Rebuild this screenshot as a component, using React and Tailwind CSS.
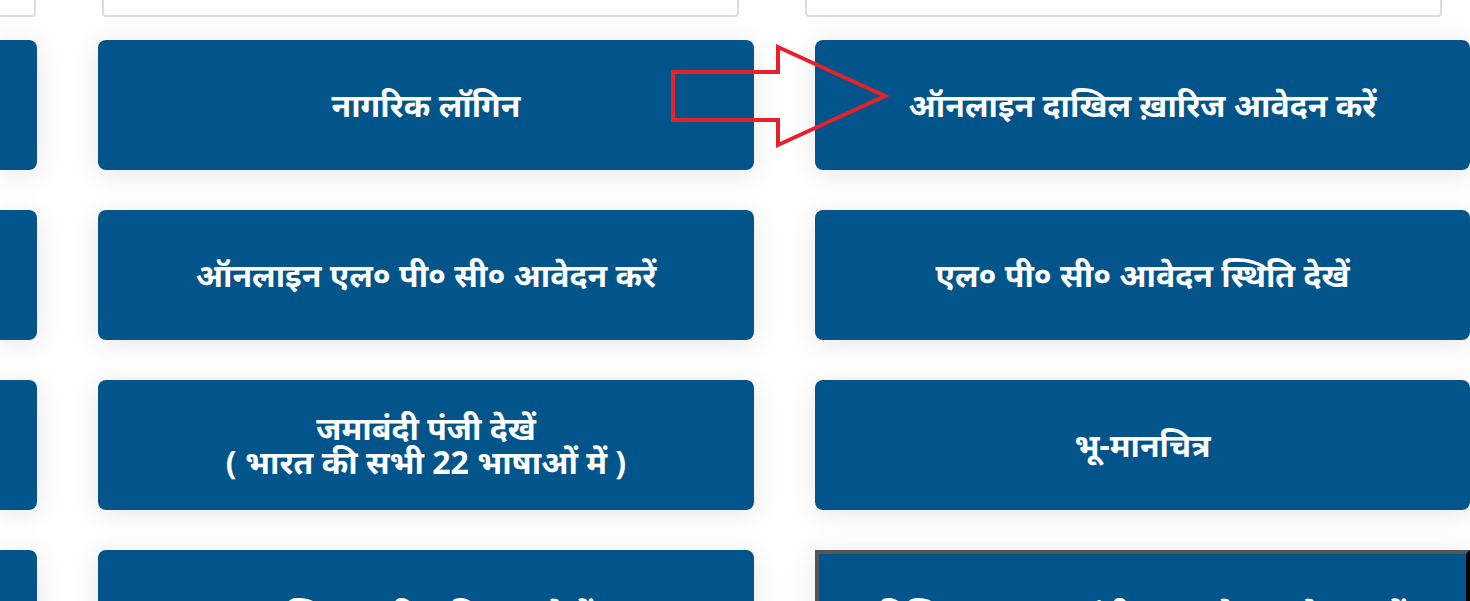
import React from "react";

const services = [
  { id: "login", label: "नागरिक लॉगिन" },
  { id: "mutation", label: "ऑनलाइन दाखिल ख़ारिज आवेदन करें" },
  { id: "lpc", label: "ऑनलाइन एल० पी० सी० आवेदन करें" },
  { id: "lpc-status", label: "एल० पी० सी० आवेदन स्थिति देखें" },
  { id: "jamabandi", label: "जमाबंदी पंजी देखें", sub: "( भारत की सभी 22 भाषाओं में )" },
  { id: "map", label: "भू-मानचित्र" },
  { id: "mutation-detail", label: "दाखिल ख़ारिज विवरण देखें" },
  { id: "digitized", label: "डिजिटाइज्ड जमाबंदी सुधार हेतु आवेदन करें", active: true },
];

const ServiceButton = ({ item }) => (
  <button
    type="button"
    className={
      item.active
        ? "h-[130px] w-full bg-[#02558a] text-white text-[32px] font-bold leading-[34px] whitespace-nowrap shadow-[0_4px_28px_rgba(0,0,0,0.1)] border-[4px] border-[#555] border-r-black border-b-black"
        : "h-[130px] w-full bg-[#02558a] text-white text-[32px] font-bold leading-[34px] whitespace-nowrap rounded-[8px] shadow-[0_4px_28px_rgba(0,0,0,0.1)]"
    }
  >
    <span className="block">{item.label}</span>
    {item.sub && <span className="block">{item.sub}</span>}
  </button>
);

// left column is scrolled mostly off-screen, only its right edge shows
const EdgeButton = () => (
  <div className="h-[130px] w-full bg-[#02558a] rounded-r-[8px] shadow-[0_4px_28px_rgba(0,0,0,0.1)]" />
);

export default function App() {
  const rows = [];
  for (let i = 0; i < services.length; i += 2) rows.push(services.slice(i, i + 2));

  return (
    <div
      className="relative w-[1470px] h-[601px] overflow-hidden bg-white"
      style={{ fontFamily: '"Noto Sans", "Lohit Devanagari", "Noto Sans Devanagari", sans-serif' }}
    >
      {/* search inputs above the grid */}
      <div className="flex gap-[66px] -mt-[31px]">
        <div className="w-[36px] h-[48px] shrink-0 bg-white border-2 border-[#dcdcdc] border-l-0 rounded-r-[4px]" />
        <input className="w-[637px] h-[48px] shrink-0 bg-white border-2 border-[#dcdcdc] rounded-[4px]" />
        <input className="w-[637px] h-[48px] shrink-0 bg-white border-2 border-[#dcdcdc] rounded-[4px]" />
      </div>

      <div className="mt-[23px] grid grid-cols-[37px_656px_1fr] gap-x-[61px] gap-y-[40px]">
        {rows.map((pair) => (
          <React.Fragment key={pair[0].id}>
            <EdgeButton />
            <ServiceButton item={pair[0]} />
            <ServiceButton item={pair[1]} />
          </React.Fragment>
        ))}
      </div>

      {/* red pointer arrow */}
      <svg className="absolute left-0 top-0 pointer-events-none" width="1470" height="601">
        <polygon
          points="673,72 778,72 778,47 885,96 778,145 778,120 673,120"
          fill="none"
          stroke="#e8202a"
          strokeWidth="4"
        />
      </svg>
    </div>
  );
}
